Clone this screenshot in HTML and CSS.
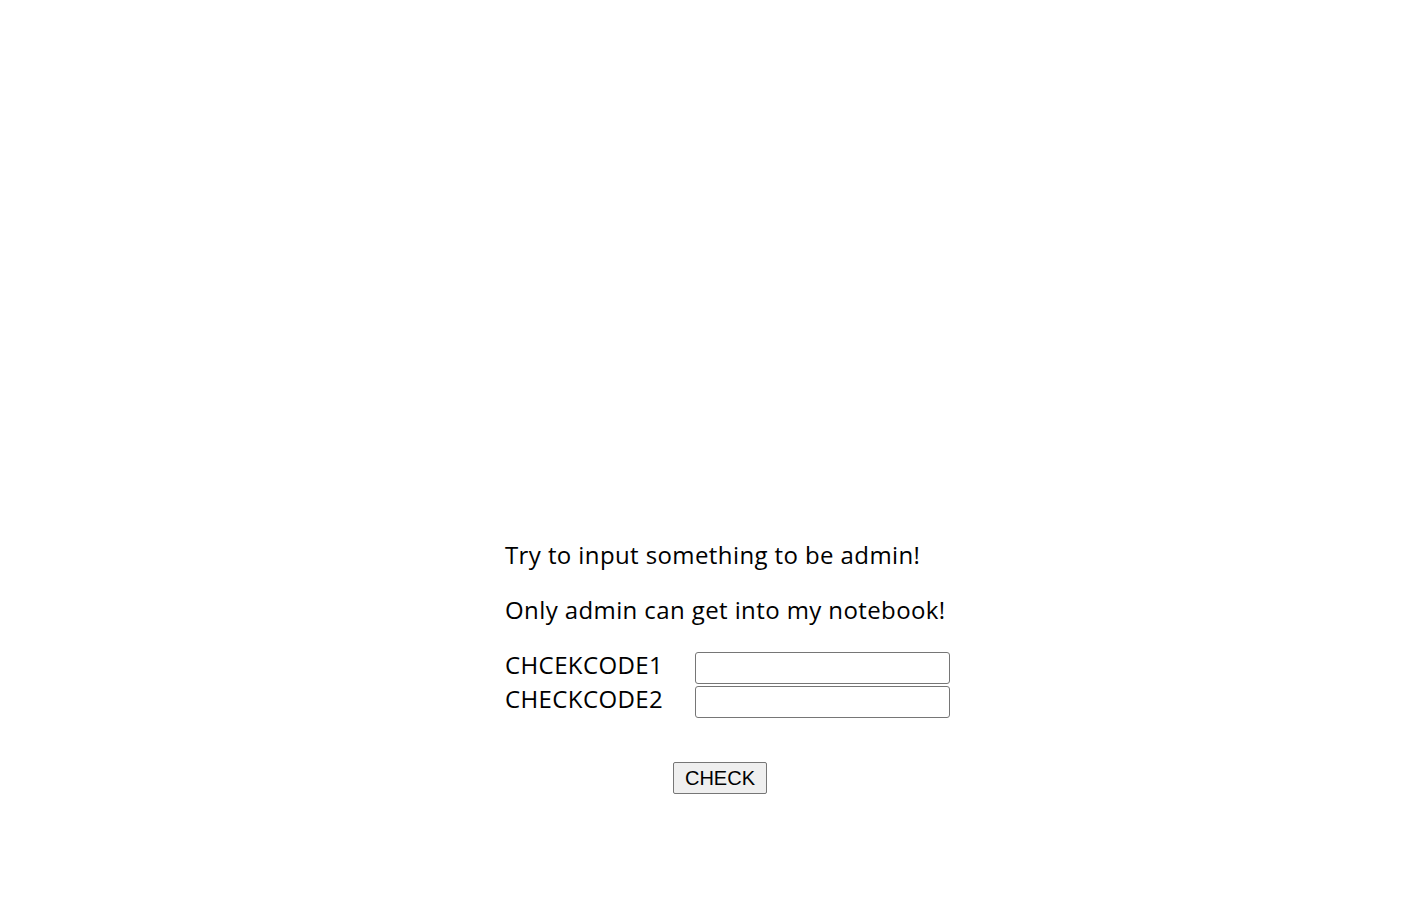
FILE: index.html
```html
<!DOCTYPE html>
<html>
<head>
<meta charset="utf-8">
<link rel="stylesheet" href="styles.css">
</head>
<body>
<div class="page">
  <form class="form">
    <p class="line">Try to input something to be admin!</p>
    <p class="line">Only admin can get into my notebook!</p>
    <div class="fields">
      <div class="row">
        <span class="label">CHCEKCODE1</span>
        <input class="field" type="text">
      </div>
      <div class="row">
        <span class="label">CHECKCODE2</span>
        <input class="field" type="text">
      </div>
    </div>
    <div class="actions">
      <button class="btn" type="button">CHECK</button>
    </div>
  </form>
</div>
</body>
</html>
```
FILE: styles.css
```css
html, body {
  margin: 0;
  padding: 0;
  background: #fff;
}
.page {
  padding-top: 539px;
  padding-left: 505px;
}
.form {
  width: 445px;
  font-family: "Open Sans", "Noto Sans", sans-serif;
  font-size: 24px;
  letter-spacing: 0.4px;
  color: #000;
}
.line {
  margin: 0 0 23px 0;
  line-height: 32px;
}
.fields {
  display: flex;
  flex-direction: column;
  gap: 2px;
  margin-top: 26px;
}
.row {
  display: flex;
  align-items: flex-start;
  height: 32px;
}
.label {
  width: 190px;
  line-height: 26px;
}
.field {
  box-sizing: border-box;
  width: 255px;
  height: 32px;
  border: 1px solid #767676;
  border-radius: 3px;
  margin: 0;
  padding: 0 4px;
  background: #fff;
}
.actions {
  display: flex;
  justify-content: center;
  padding-top: 44px;
  padding-right: 15px;
}
.btn {
  box-sizing: border-box;
  width: 94px;
  height: 32px;
  font-family: "Liberation Sans", Arial, sans-serif;
  font-size: 20px;
  letter-spacing: 0;
  color: #000;
  background: #efefef;
  border: 1px solid #767676;
  border-radius: 2px;
  padding: 0;
}
```
